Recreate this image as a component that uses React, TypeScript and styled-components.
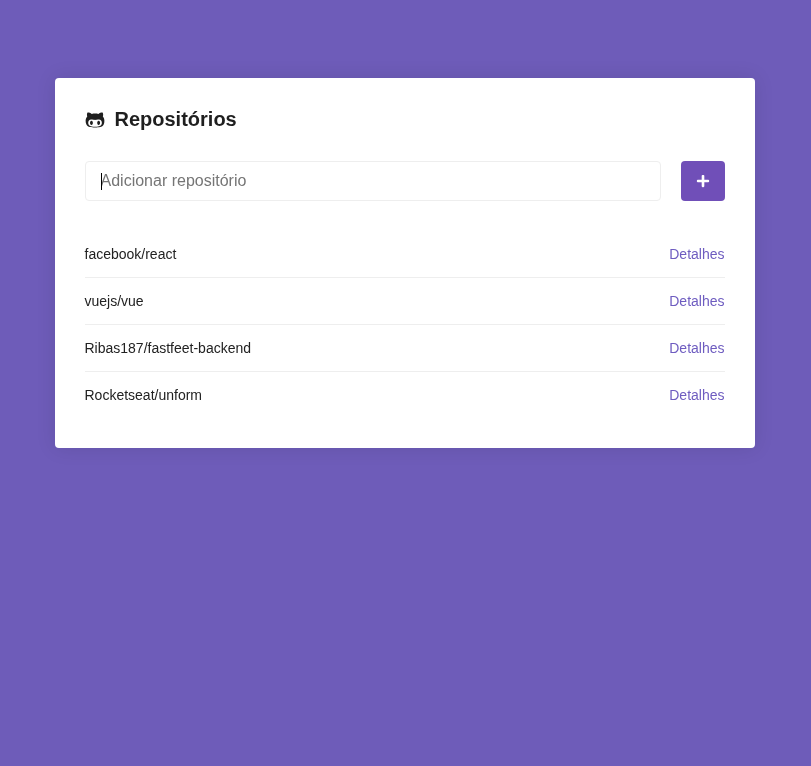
import React from "react";
import styled, { createGlobalStyle } from "styled-components";
import { FaGithubAlt, FaPlus } from "react-icons/fa";

const Global = createGlobalStyle`
  * { margin: 0; padding: 0; box-sizing: border-box; outline: 0; }
  html, body { height: 100%; }
  body { background: #6e5cb9; font-family: "Liberation Sans", Arial, sans-serif; font-size: 14px; }
`;
const Page = styled.div`
  padding: 78px 0 0 55px;
`;
const Card = styled.main`
  width: 700px; background: #fff; border-radius: 4px; box-shadow: 0 0 20px rgba(0,0,0,0.1);
  padding: 30px 30.5px 30px 29.5px; will-change: transform;
`;
const Title = styled.h1`
  display: flex; align-items: center; font-size: 20px; line-height: 23px; font-weight: 700; color: #1f1f1f;
  svg { margin-right: 10px; }
`;
const Form = styled.form`
  margin-top: 30px; display: flex; flex-direction: row;
`;
const Field = styled.div`
  position: relative; flex: 1; display: flex;
`;
const Input = styled.input`
  flex: 1; border: 1px solid #eee; padding: 10px 15px; border-radius: 4px; font-size: 16px; font-family: inherit; height: 40px;
  &::placeholder { color: #757575; }
`;
const Caret = styled.span`
  position: absolute; left: 16.5px; top: 12px; width: 1px; height: 17px; background: #000;
`;
const Add = styled.button`
  background: #704fb8; border: 0; padding: 0 15px; margin-left: 20px; border-radius: 4px; width: 44px; height: 40px;
  display: flex; justify-content: center; align-items: center; color: #fff;
`;
const List = styled.ul`
  list-style: none; margin-top: 30px;
`;
const Item = styled.li`
  padding: 15px 0; display: flex; justify-content: space-between; align-items: center; line-height: 16px; color: #222;
  & + li { border-top: 1px solid #eee; }
`;
const Details = styled.a`
  color: #6e5cc0; text-decoration: none;
`;
const repos = ["facebook/react", "vuejs/vue", "Ribas187/fastfeet-backend", "Rocketseat/unform"];
export default function App() {
  return (
    <>
      <Global />
      <Page>
        <Card>
          <Title><FaGithubAlt size={20} />Repositórios</Title>
          <Form onSubmit={(e) => e.preventDefault()}>
            <Field>
              <Input type="text" placeholder="Adicionar repositório" />
              <Caret />
            </Field>
            <Add type="submit"><FaPlus size={14} color="#fff" /></Add>
          </Form>
          <List>
            {repos.map((r) => (
              <Item key={r}><span>{r}</span><Details href="#">Detalhes</Details></Item>
            ))}
          </List>
        </Card>
      </Page>
    </>
  );
}
